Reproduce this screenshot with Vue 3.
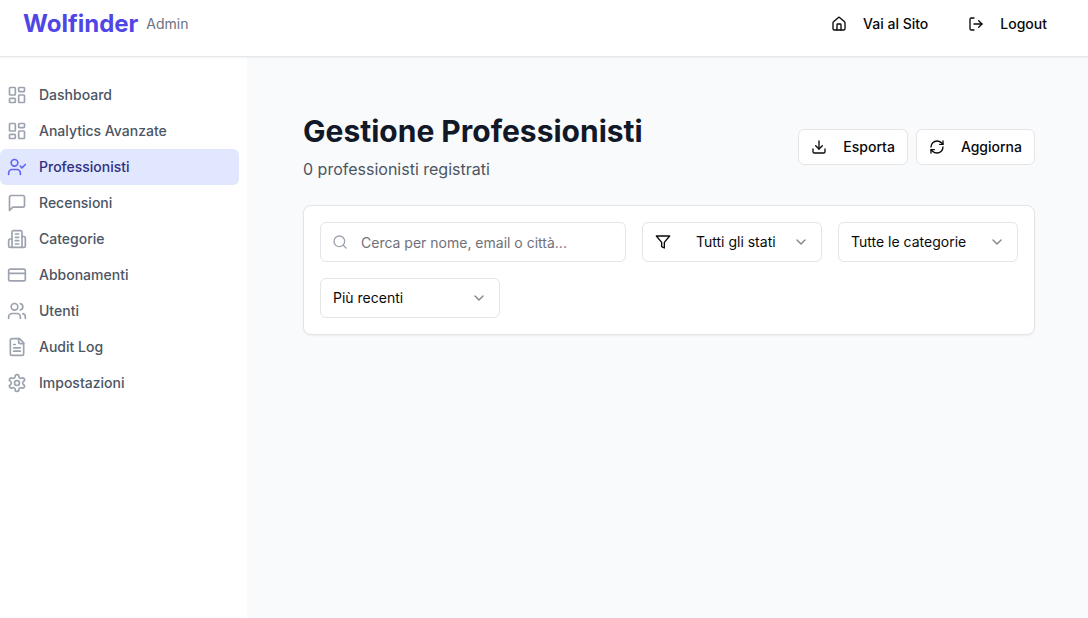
<script setup>
import { ref } from 'vue'

const icons = {
  house: [
    'M15 21v-8a1 1 0 0 0-1-1h-4a1 1 0 0 0-1 1v8',
    'M3 10a2 2 0 0 1 .709-1.528l7-5.999a2 2 0 0 1 2.582 0l7 5.999A2 2 0 0 1 21 10v9a2 2 0 0 1-2 2H5a2 2 0 0 1-2-2z',
  ],
  logout: ['M9 21H5a2 2 0 0 1-2-2V5a2 2 0 0 1 2-2h4', 'm16 17 5-5-5-5', 'M21 12H9'],
  dashboard: [
    'M4 3h5a1 1 0 0 1 1 1v7a1 1 0 0 1-1 1H4a1 1 0 0 1-1-1V4a1 1 0 0 1 1-1z',
    'M15 3h5a1 1 0 0 1 1 1v3a1 1 0 0 1-1 1h-5a1 1 0 0 1-1-1V4a1 1 0 0 1 1-1z',
    'M15 12h5a1 1 0 0 1 1 1v7a1 1 0 0 1-1 1h-5a1 1 0 0 1-1-1v-7a1 1 0 0 1 1-1z',
    'M4 16h5a1 1 0 0 1 1 1v3a1 1 0 0 1-1 1H4a1 1 0 0 1-1-1v-3a1 1 0 0 1 1-1z',
  ],
  userCheck: [
    'M16 21v-2a4 4 0 0 0-4-4H6a4 4 0 0 0-4 4v2',
    'M13 7a4 4 0 1 1-8 0 4 4 0 0 1 8 0z',
    'm16 11 2 2 4-4',
  ],
  message: ['M21 15a2 2 0 0 1-2 2H7l-4 4V5a2 2 0 0 1 2-2h14a2 2 0 0 1 2 2z'],
  building: [
    'M6 22V4a2 2 0 0 1 2-2h8a2 2 0 0 1 2 2v18Z',
    'M6 12H4a2 2 0 0 0-2 2v6a2 2 0 0 0 2 2h2',
    'M18 9h2a2 2 0 0 1 2 2v9a2 2 0 0 1-2 2h-2',
    'M10 6h4', 'M10 10h4', 'M10 14h4', 'M10 18h4',
  ],
  card: ['M4 5h16a2 2 0 0 1 2 2v10a2 2 0 0 1-2 2H4a2 2 0 0 1-2-2V7a2 2 0 0 1 2-2z', 'M2 10h20'],
  users: [
    'M16 21v-2a4 4 0 0 0-4-4H6a4 4 0 0 0-4 4v2',
    'M13 7a4 4 0 1 1-8 0 4 4 0 0 1 8 0z',
    'M22 21v-2a4 4 0 0 0-3-3.87',
    'M16 3.13a4 4 0 0 1 0 7.75',
  ],
  file: [
    'M15 2H6a2 2 0 0 0-2 2v16a2 2 0 0 0 2 2h12a2 2 0 0 0 2-2V7Z',
    'M14 2v4a2 2 0 0 0 2 2h4',
    'M10 9H8', 'M16 13H8', 'M16 17H8',
  ],
  settings: [
    'M12.22 2h-.44a2 2 0 0 0-2 2v.18a2 2 0 0 1-1 1.73l-.43.25a2 2 0 0 1-2 0l-.15-.08a2 2 0 0 0-2.73.73l-.22.38a2 2 0 0 0 .73 2.73l.15.1a2 2 0 0 1 1 1.72v.51a2 2 0 0 1-1 1.74l-.15.09a2 2 0 0 0-.73 2.73l.22.38a2 2 0 0 0 2.73.73l.15-.08a2 2 0 0 1 2 0l.43.25a2 2 0 0 1 1 1.73V20a2 2 0 0 0 2 2h.44a2 2 0 0 0 2-2v-.18a2 2 0 0 1 1-1.73l.43-.25a2 2 0 0 1 2 0l.15.08a2 2 0 0 0 2.73-.73l.22-.39a2 2 0 0 0-.73-2.73l-.15-.08a2 2 0 0 1-1-1.74v-.5a2 2 0 0 1 1-1.74l.15-.09a2 2 0 0 0 .73-2.73l-.22-.38a2 2 0 0 0-2.73-.73l-.15.08a2 2 0 0 1-2 0l-.43-.25a2 2 0 0 1-1-1.73V4a2 2 0 0 0-2-2z',
    'M15 12a3 3 0 1 1-6 0 3 3 0 0 1 6 0z',
  ],
  download: ['M21 15v4a2 2 0 0 1-2 2H5a2 2 0 0 1-2-2v-4', 'm7 10 5 5 5-5', 'M12 15V3'],
  refresh: [
    'M3 12a9 9 0 0 1 9-9 9.75 9.75 0 0 1 6.74 2.74L21 8',
    'M21 3v5h-5',
    'M21 12a9 9 0 0 1-9 9 9.75 9.75 0 0 1-6.74-2.74L3 16',
    'M8 16H3v5',
  ],
  search: ['M19 11a8 8 0 1 1-16 0 8 8 0 0 1 16 0z', 'm21 21-4.3-4.3'],
  filter: ['M22 3H2l8 9.46V19l4 2v-8.54L22 3z'],
  chevron: ['m6 9 6 6 6-6'],
}

const navItems = [
  { label: 'Dashboard', icon: 'dashboard' },
  { label: 'Analytics Avanzate', icon: 'dashboard' },
  { label: 'Professionisti', icon: 'userCheck', active: true },
  { label: 'Recensioni', icon: 'message' },
  { label: 'Categorie', icon: 'building' },
  { label: 'Abbonamenti', icon: 'card' },
  { label: 'Utenti', icon: 'users' },
  { label: 'Audit Log', icon: 'file' },
  { label: 'Impostazioni', icon: 'settings' },
]

const filters = [
  { id: 'stato', name: 'Stato', value: 'Tutti gli stati', icon: 'filter' },
  { id: 'categoria', name: 'Categoria', value: 'Tutte le categorie' },
  { id: 'ordine', name: 'Ordinamento', value: 'Più recenti' },
]

const query = ref('')
</script>

<template>
  <div class="page">
    <header class="topbar">
      <div class="brand">
        <span class="brand-name">Wolfinder</span>
        <span class="brand-role">Admin</span>
      </div>
      <div class="topbar-actions">
        <a class="btn ghost" href="#">
          <svg class="icon" viewBox="0 0 24 24" aria-hidden="true"><path v-for="d in icons.house" :key="d" :d="d" /></svg>
          Vai al Sito
        </a>
        <button class="btn ghost" type="button">
          <svg class="icon" viewBox="0 0 24 24" aria-hidden="true"><path v-for="d in icons.logout" :key="d" :d="d" /></svg>
          Logout
        </button>
      </div>
    </header>

    <div class="body">
      <aside class="sidebar">
        <nav>
          <a
            v-for="item in navItems"
            :key="item.label"
            href="#"
            class="nav-item"
            :class="{ active: item.active }"
            :aria-current="item.active ? 'page' : undefined"
          >
            <svg class="icon nav-icon" viewBox="0 0 24 24" aria-hidden="true"><path v-for="d in icons[item.icon]" :key="d" :d="d" /></svg>
            {{ item.label }}
          </a>
        </nav>
      </aside>

      <main class="content">
        <div class="heading">
          <div>
            <h1>Gestione Professionisti</h1>
            <p>0 professionisti registrati</p>
          </div>
          <div class="heading-actions">
            <button class="btn outline" type="button">
              <svg class="icon" viewBox="0 0 24 24" aria-hidden="true"><path v-for="d in icons.download" :key="d" :d="d" /></svg>
              Esporta
            </button>
            <button class="btn outline" type="button">
              <svg class="icon" viewBox="0 0 24 24" aria-hidden="true"><path v-for="d in icons.refresh" :key="d" :d="d" /></svg>
              Aggiorna
            </button>
          </div>
        </div>

        <section class="card">
          <div class="field search">
            <svg class="icon lead" viewBox="0 0 24 24" aria-hidden="true"><path v-for="d in icons.search" :key="d" :d="d" /></svg>
            <input v-model="query" type="text" aria-label="Cerca professionisti" placeholder="Cerca per nome, email o città..." />
          </div>
          <div v-for="f in filters" :key="f.id" class="field dropdown" :class="{ 'with-icon': f.icon }">
            <svg v-if="f.icon" class="icon lead" viewBox="0 0 24 24" aria-hidden="true"><path v-for="d in icons[f.icon]" :key="d" :d="d" /></svg>
            <select :id="f.id" :aria-label="f.name">
              <option>{{ f.value }}</option>
            </select>
            <svg class="icon chevron" viewBox="0 0 24 24" aria-hidden="true"><path v-for="d in icons.chevron" :key="d" :d="d" /></svg>
          </div>
        </section>
      </main>
    </div>
  </div>
</template>

<style>
body {
  margin: 0;
  background: #f9fafb;
}
</style>

<style scoped>
.page,
.page * {
  box-sizing: border-box;
}
.page {
  display: flex;
  flex-direction: column;
  min-height: 100vh;
  font-family: Inter, "Liberation Sans", sans-serif;
  font-size: 14px;
  line-height: 20px;
  color: #09090b;
  background: #f9fafb;
}
.icon {
  width: 16px;
  height: 16px;
  flex: none;
  fill: none;
  stroke: currentColor;
  stroke-width: 2;
  stroke-linecap: round;
  stroke-linejoin: round;
}
.topbar {
  position: relative;
  display: flex;
  align-items: center;
  justify-content: space-between;
  padding: 6px 29px 14px 23px;
  background: #fff;
  border-bottom: 1px solid #e5e7eb;
  box-shadow: 0 1px 2px rgba(0, 0, 0, 0.05);
}
.brand {
  display: flex;
  align-items: center;
  gap: 8px;
}
.brand-name {
  font-size: 24px;
  line-height: 32px;
  font-weight: 700;
  color: #4f46e5;
}
.brand-role {
  color: #6b7280;
}
.topbar-actions {
  display: flex;
  gap: 16px;
}
.btn {
  display: inline-flex;
  align-items: center;
  gap: 16px;
  height: 36px;
  padding: 0 12px;
  border: 0;
  border-radius: 6px;
  background: #fff;
  color: #09090b;
  font: inherit;
  font-weight: 500;
  text-decoration: none;
  white-space: nowrap;
  cursor: pointer;
}
.btn.outline {
  border: 1px solid #e4e4e7;
}
.body {
  display: flex;
  flex: 1;
}
.sidebar {
  flex: none;
  width: 247px;
  padding: 20px 8px 20px 0;
  background: #fff;
}
.nav-item {
  display: flex;
  align-items: center;
  gap: 12px;
  padding: 8px 7px;
  border-radius: 6px;
  color: #4b5563;
  font-weight: 500;
  text-decoration: none;
}
.nav-icon {
  width: 20px;
  height: 20px;
  color: #9ca3af;
}
.nav-item.active {
  background: #e0e7ff;
  color: #312e81;
}
.nav-item.active .nav-icon {
  color: #6366f1;
}
.content {
  flex: 1;
  min-width: 0;
  padding: 56px 53px 56px 56px;
}
.heading {
  display: flex;
  align-items: center;
  justify-content: space-between;
  gap: 16px;
  margin-bottom: 24px;
}
h1 {
  margin: 0;
  font-size: 30px;
  line-height: 36px;
  font-weight: 700;
  color: #111827;
}
p {
  margin: 8px 0 0;
  font-size: 16px;
  line-height: 24px;
  color: #4b5563;
}
.heading-actions {
  display: flex;
  gap: 8px;
}
.card {
  display: flex;
  flex-wrap: wrap;
  gap: 16px;
  padding: 16px;
  background: #fff;
  border: 1px solid #e4e4e7;
  border-radius: 8px;
  box-shadow: 0 1px 2px rgba(0, 0, 0, 0.05);
}
.field {
  position: relative;
  height: 40px;
}
.search {
  flex: 1 1 300px;
}
.dropdown {
  flex: none;
  width: 180px;
}
.field input,
.field select {
  width: 100%;
  height: 100%;
  border: 1px solid #e4e4e7;
  border-radius: 6px;
  background: #fff;
  color: #09090b;
  font: inherit;
  outline: none;
}
.field input {
  padding: 0 12px 0 40px;
}
.field input::placeholder {
  color: #71717a;
}
.field select {
  appearance: none;
  padding: 0 36px 0 12px;
}
.with-icon select {
  padding-left: 53px;
}
.lead,
.chevron {
  position: absolute;
  top: 12px;
  pointer-events: none;
}
.lead {
  left: 13px;
}
.search .lead {
  left: 12px;
  color: #9ca3af;
}
.chevron {
  right: 13px;
  opacity: 0.5;
}
</style>
